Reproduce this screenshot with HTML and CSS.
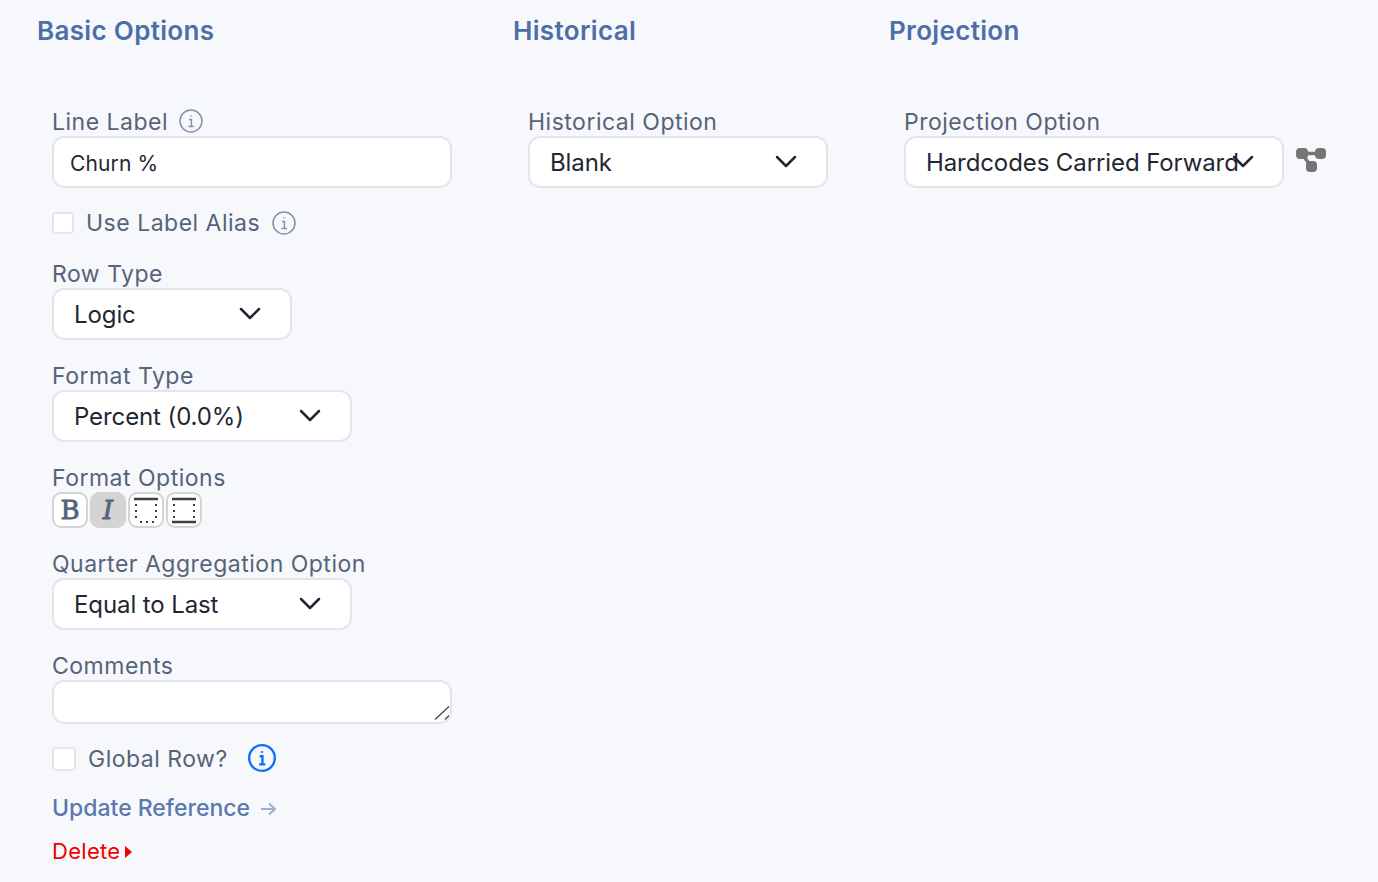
FILE: index.html
```html
<!DOCTYPE html>
<html>
<head>
    <link rel="stylesheet" href="styles.css">
</head>
<body>
    <div class="columns">
        <section class="column basic">
            <h2>Basic Options</h2>
            <div class="column-body">
                <div class="field">
                    <label>Line Label
                        <svg class="info grey" viewBox="0 0 24 24"><circle cx="12" cy="12" r="11"/><path d="M10 10.5h2.4v7M9.5 17.5h5.4M12 6.2v1.4"/></svg>
                    </label>
                    <input class="text-input" type="text" value="Churn %">
                </div>
                <div class="check-row alias">
                    <span class="check small"></span>
                    <span>Use Label Alias</span>
                    <svg class="info grey" viewBox="0 0 24 24"><circle cx="12" cy="12" r="11"/><path d="M10 10.5h2.4v7M9.5 17.5h5.4M12 6.2v1.4"/></svg>
                </div>
                <div class="field">
                    <label>Row Type</label>
                    <div class="select w240">
                        <select><option>Logic</option></select>
                        <svg class="chevron" viewBox="0 0 22 14"><path d="M2 2l9 9 9-9"/></svg>
                    </div>
                </div>
                <div class="field">
                    <label>Format Type</label>
                    <div class="select w300">
                        <select><option>Percent (0.0%)</option></select>
                        <svg class="chevron" viewBox="0 0 22 14"><path d="M2 2l9 9 9-9"/></svg>
                    </div>
                </div>
                <div class="field">
                    <label>Format Options</label>
                    <div class="format-buttons">
                        <button class="fmt bold">B</button>
                        <button class="fmt italic active">I</button>
                        <button class="fmt">
                            <svg viewBox="0 0 24 28"><path class="solid" d="M0 3h24"/><path class="dots" d="M2 8v18M22 8v18M6 26h14"/></svg>
                        </button>
                        <button class="fmt">
                            <svg viewBox="0 0 24 28"><path class="solid" d="M0 3h24M0 26h24"/><path class="dots" d="M2 8v15M22 8v15"/></svg>
                        </button>
                    </div>
                </div>
                <div class="field">
                    <label>Quarter Aggregation Option</label>
                    <div class="select w300">
                        <select><option>Equal to Last</option></select>
                        <svg class="chevron" viewBox="0 0 22 14"><path d="M2 2l9 9 9-9"/></svg>
                    </div>
                </div>
                <div class="field">
                    <label>Comments</label>
                    <div class="comments-box">
                        <textarea class="comments"></textarea>
                        <svg class="grip" viewBox="0 0 16 14"><path d="M1 13.500L15 .5M11 13.500l4-4"/></svg>
                    </div>
                </div>
                <div class="check-row global">
                    <span class="check"></span>
                    <span>Global Row?</span>
                    <svg class="info blue" viewBox="0 0 24 24"><circle cx="12" cy="12" r="11"/><path d="M10 10.500h2.400v7M9.500 17.500h5.400M12 6.200v1.400"/></svg>
                </div>
                <a class="update-link" href="#">Update Reference
                    <svg viewBox="0 0 16 14"><path d="M1 7h14M9 1.500L15 7l-6 5.500"/></svg>
                </a>
                <a class="delete-link" href="#">Delete<span class="caret"></span></a>
            </div>
        </section>
        <section class="column historical">
            <h2>Historical</h2>
            <div class="column-body">
                <div class="field">
                    <label>Historical Option</label>
                    <div class="select w300">
                        <select><option>Blank</option></select>
                        <svg class="chevron" viewBox="0 0 22 14"><path d="M2 2l9 9 9-9"/></svg>
                    </div>
                </div>
            </div>
        </section>
        <section class="column projection">
            <h2>Projection</h2>
            <div class="column-body">
                <div class="field">
                    <label>Projection Option</label>
                    <div class="select-row">
                        <div class="select w380">
                            <select><option>Hardcodes Carried Forward</option></select>
                            <svg class="chevron" viewBox="0 0 22 14"><path d="M2 2l9 9 9-9"/></svg>
                        </div>
                        <svg class="tree" viewBox="0 0 30 24"><path class="link" d="M6 5.500h19M6 5.500l9 13"/><rect x="0" y="0" width="12" height="11" rx="4"/><rect x="19" y="0" width="11" height="11" rx="4"/><rect x="10" y="13" width="11" height="11" rx="4"/></svg>
                    </div>
                </div>
            </div>
        </section>
    </div>
</body>
</html>
```

FILE: styles.css
```css
* {
    box-sizing: border-box;
}

body {
    font-family: Inter, "Noto Sans", sans-serif;
    background-color: #f7f8fc;
    margin: 0;
    color: #566378;
    height: 882px;
    overflow: hidden;
}

.columns {
    display: flex;
    padding: 13px 0 0 37px;
}

.column.basic {
    width: 476px;
}

.column.historical {
    width: 376px;
}

.column.projection {
    flex: 1;
}

h2 {
    margin: 0;
    font-size: 26px;
    line-height: 36px;
    font-weight: 600;
    letter-spacing: 0.33px;
    color: #4c6fa8;
}

.column-body {
    padding: 59px 0 0 15px;
}

.field {
    margin-bottom: 22px;
}

label {
    display: block;
    font-size: 23px;
    line-height: 28px;
    letter-spacing: 0.5px;
    height: 28px;
    color: #566378;
}

.info {
    width: 24px;
    height: 24px;
    margin-left: 4px;
    vertical-align: -3px;
    fill: none;
    stroke-width: 1.500;
}

.info.grey {
    stroke: #8493a8;
}

.info.blue {
    stroke: #0d6efd;
    stroke-width: 2;
    width: 28px;
    height: 28px;
    margin: -2px 0 0 20px;
}

.text-input,
.select select,
.comments {
    background: white;
    border: 2px solid #e2e5ec;
    border-radius: 12px;
    color: #1f2733;
    font-family: inherit;
    outline: none;
}

.text-input {
    display: block;
    width: 400px;
    height: 52px;
    padding: 2px 16px 0;
    font-size: 21px;
    letter-spacing: 0.15px;
}

.select {
    position: relative;
}

.select select {
    display: block;
    width: 100%;
    height: 52px;
    padding: 0 0 0 20px;
    font-size: 24px;
    letter-spacing: -0.1px;
    appearance: none;
}

.w240 {
    width: 240px;
}

.w300 {
    width: 300px;
}

.w380 {
    width: 380px;
}

.chevron {
    position: absolute;
    right: 31px;
    top: 19px;
    width: 22px;
    height: 14px;
    fill: none;
    stroke: #1f2733;
    stroke-width: 2.500;
    stroke-linecap: round;
    stroke-linejoin: round;
}

.w380 .chevron {
    right: 30px;
}

.select-row {
    display: flex;
    align-items: flex-start;
    gap: 12px;
}

.tree {
    width: 30px;
    height: 24px;
    margin-top: 12px;
    fill: #757575;
}

.tree .link {
    fill: none;
    stroke: #757575;
    stroke-width: 3.500;
}

.check-row {
    display: flex;
    align-items: center;
    height: 28px;
    margin-bottom: 22px;
    font-size: 23px;
    letter-spacing: 0.5px;
}

.check-row.alias {
    margin-top: -1px;
    margin-bottom: 23px;
}

.check-row.alias .info {
    margin-left: 12px;
}

.check {
    width: 24px;
    height: 24px;
    margin-right: 12px;
    background: white;
    border: 2px solid #e2e5ec;
    border-radius: 4px;
}

.check.small {
    width: 22px;
    height: 22px;
}

.format-buttons {
    display: flex;
    gap: 2px;
}

.fmt {
    width: 36px;
    height: 36px;
    padding: 0;
    display: flex;
    align-items: center;
    justify-content: center;
    background: white;
    border: 2px solid #d4d4d4;
    border-radius: 9px;
    color: #566378;
    font-size: 26px;
    font-family: "DejaVu Serif", serif;
}

.fmt.bold {
    -webkit-text-stroke: 0.8px #566378;
}

.fmt.italic {
    font-style: italic;
    -webkit-text-stroke: 0.8px #566378;
}

.fmt.active {
    background: #d4d4d4;
}

.fmt svg {
    width: 24px;
    height: 28px;
    flex: none;
    fill: none;
    stroke: #3a3f47;
}

.fmt .solid {
    stroke-width: 2.500;
}

.fmt .dots {
    stroke-width: 2;
    stroke-dasharray: 2 4;
}

.comments-box {
    position: relative;
    width: 400px;
}

.comments {
    display: block;
    width: 400px;
    height: 44px;
    resize: none;
}

.grip {
    position: absolute;
    right: 2px;
    bottom: 4px;
    width: 16px;
    height: 14px;
    fill: none;
    stroke: #555;
    stroke-width: 1.500;
}

.check-row.global {
    margin-top: -1px;
    margin-bottom: 0;
}

.update-link {
    display: block;
    margin-top: 21px;
    font-size: 23px;
    line-height: 28px;
    font-weight: 500;
    color: #5a78ae;
    text-decoration: none;
}

.update-link svg {
    width: 16px;
    height: 14px;
    margin-left: 4px;
    fill: none;
    stroke: #9aafd0;
    stroke-width: 2;
}

.delete-link {
    display: flex;
    align-items: center;
    margin-top: 15px;
    font-size: 22px;
    line-height: 28px;
    letter-spacing: 0.3px;
    color: #f00000;
    text-decoration: none;
}

.caret {
    width: 0;
    height: 0;
    margin: 2px 0 0 5px;
    border-left: 7px solid #f00000;
    border-top: 6px solid transparent;
    border-bottom: 6px solid transparent;
}
```
